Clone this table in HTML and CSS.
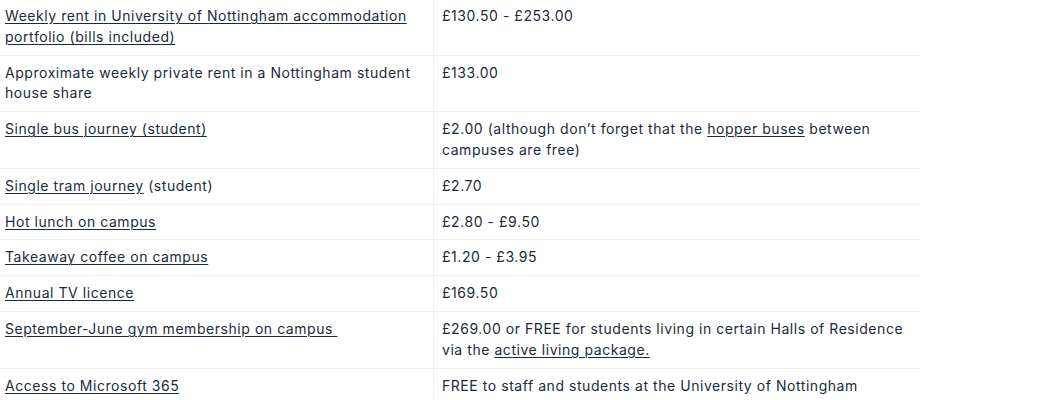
FILE: index.html
```html
<!DOCTYPE html>
<html lang="en">
<head>
<meta charset="utf-8">
<title>Cost of living</title>
<link rel="stylesheet" href="styles.css">
</head>
<body>
<table class="costs">
  <tbody>
    <tr>
      <td class="item"><a href="#">Weekly rent in University of Nottingham accommodation portfolio (bills included)</a></td>
      <td class="price">£130.50 - £253.00</td>
    </tr>
    <tr>
      <td class="item">Approximate weekly private rent in a Nottingham student house share</td>
      <td class="price">£133.00</td>
    </tr>
    <tr>
      <td class="item"><a href="#">Single bus journey (student)</a></td>
      <td class="price">£2.00 (although don’t forget that the <a href="#">hopper buses</a> between campuses are free)</td>
    </tr>
    <tr>
      <td class="item"><a href="#">Single tram journey</a> (student)</td>
      <td class="price">£2.70</td>
    </tr>
    <tr>
      <td class="item"><a href="#">Hot lunch on campus</a></td>
      <td class="price">£2.80 - £9.50</td>
    </tr>
    <tr>
      <td class="item"><a href="#">Takeaway coffee on campus</a></td>
      <td class="price">£1.20 - £3.95</td>
    </tr>
    <tr>
      <td class="item"><a href="#">Annual TV licence</a></td>
      <td class="price">£169.50</td>
    </tr>
    <tr>
      <td class="item"><a href="#">September-June gym membership on campus&nbsp;</a></td>
      <td class="price">£269.00 or FREE for students living in certain Halls of Residence via the <a href="#">active living package.</a></td>
    </tr>
    <tr>
      <td class="item"><a href="#">Access to Microsoft 365</a></td>
      <td class="price">FREE to staff and students at the University of Nottingham</td>
    </tr>
  </tbody>
</table>
</body>
</html>
```
FILE: styles.css
```css
html, body {
  margin: 0;
  padding: 0;
  background: #ffffff;
}

body {
  font-family: Inter, "Liberation Sans", sans-serif;
  font-size: 14px;
  line-height: 20.8px;
  letter-spacing: 0.55px;
  color: #1b2b3c;
}

.costs {
  width: 921px;
  border-collapse: collapse;
  table-layout: fixed;
}

.costs td {
  vertical-align: top;
  padding: 7px 8px;
  border-bottom: 1px solid #f0f0f0;
}

.costs tr:first-child td {
  padding-top: 6px;
}

.costs .item {
  width: 420px;
  padding-left: 5px;
  border-right: 1px solid #f0f0f0;
}

.costs a {
  color: #1b2b3c;
  text-decoration: underline;
  text-decoration-thickness: 1px;
  text-underline-offset: 2px;
}
```
